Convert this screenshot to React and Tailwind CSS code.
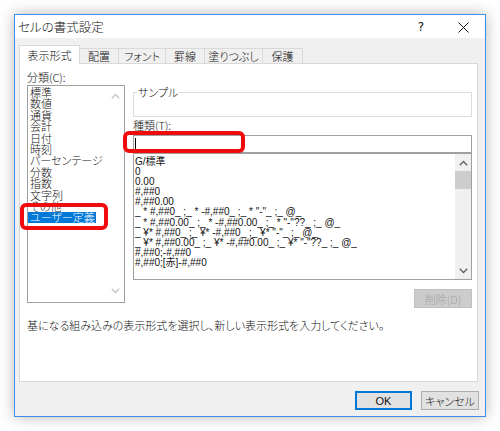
import React from "react";

const categories = [
  "標準",
  "数値",
  "通貨",
  "会計",
  "日付",
  "時刻",
  "パーセンテージ",
  "分数",
  "指数",
  "文字列",
  "その他",
  "ユーザー定義",
];

const formats = [
  "G/標準",
  "0",
  "0.00",
  "#,##0",
  "#,##0.00",
  '_ * #,##0_ ;_ * -#,##0_ ;_ * "-"_ ;_ @_',
  '_ * #,##0.00_ ;_ * -#,##0.00_ ;_ * "-"??_ ;_ @_',
  '_ ¥* #,##0_ ;_ ¥* -#,##0_ ;_ ¥* "-"_ ;_ @_',
  '_ ¥* #,##0.00_ ;_ ¥* -#,##0.00_ ;_ ¥* "-"??_ ;_ @_',
  "#,##0;-#,##0",
  "#,##0;[赤]-#,##0",
];

const tabs = [
  { label: "表示形式", w: "w-[61px]", active: true },
  { label: "配置", w: "w-[39px]" },
  { label: "フォント", w: "w-[48px]" },
  { label: "罫線", w: "w-[40px]" },
  { label: "塗りつぶし", w: "w-[59px]" },
  { label: "保護", w: "w-[41px]" },
];

function ChevUp({ color }) {
  return (
    <svg width="9" height="6" viewBox="0 0 9 6">
      <path d="M0.8 5.2 L4.5 1.5 L8.2 5.2" fill="none" stroke={color} strokeWidth="1.3" />
    </svg>
  );
}
function ChevDown({ color }) {
  return (
    <svg width="9" height="6" viewBox="0 0 9 6">
      <path d="M0.8 0.8 L4.5 4.5 L8.2 0.8" fill="none" stroke={color} strokeWidth="1.3" />
    </svg>
  );
}

export default function App() {
  return (
    <div className="relative w-[500px] h-[431px] bg-white p-[14px] text-[#111] text-[11px] font-light font-['Noto_Sans_CJK_JP',sans-serif] [font-feature-settings:'palt']">
      <div className="w-[472px] h-[403px] border border-[#3d8ee8] shadow-[0_0_14px_rgba(0,0,0,0.28)] bg-[#f0f0f0] flex flex-col">
        {/* title bar */}
        <div className="h-[23px] bg-white flex items-center pl-[3px] shrink-0">
          <span className="leading-[14px] pt-[1px] text-[12.5px]">セルの書式設定</span>
          <div className="ml-auto mr-[12px] flex items-center">
            <span className="w-[20px] text-center text-[12px] leading-[14px] font-normal font-['DejaVu_Sans',sans-serif] pt-[1px]">?</span>
            <span className="w-[20px] ml-[22px] flex items-center justify-center pt-[1px]">
              <svg width="11" height="11" viewBox="0 0 11 11">
                <path d="M0.5 0.5 L10.5 10.5 M10.5 0.5 L0.5 10.5" stroke="#111" strokeWidth="1" />
              </svg>
            </span>
          </div>
        </div>

        {/* body */}
        <div className="flex-1 pl-[4px] pr-[7px] pt-[7px] flex flex-col">
          {/* tabs */}
          <div className="h-[18px] flex items-end">
            {tabs.map((t, i) =>
              t.active ? (
                <div
                  key={t.label}
                  className={`${t.w} h-[19px] -mb-px relative z-10 bg-white border border-b-0 border-[#d9d9d9] flex items-center justify-center leading-[14px] pb-[1px]`}
                >
                  {t.label}
                </div>
              ) : (
                <div
                  key={t.label}
                  className={`${t.w} h-[15px] bg-[#f0f0f0] border border-b-0 border-[#d9d9d9] ${i > 1 ? "-ml-px" : "border-l-0"} flex items-center justify-center leading-[14px]`}
                >
                  {t.label}
                </div>
              )
            )}
          </div>

          {/* panel */}
          <div className="h-[319px] border border-[#d9d9d9] bg-white pl-[7px] pr-[5px] pt-[6px] flex flex-col">
            <div className="flex gap-[8px]">
              {/* left column */}
              <div className="w-[98px] flex flex-col">
                <div className="h-[15px] leading-[15px]">分類(C):</div>
                <div className="h-[218px] border border-[#a0a0a0] bg-white flex">
                  <div className="flex-1 pt-[1px] text-[11px]">
                    {categories.map((c) => (
                      <div key={c} className="h-[11.4px] leading-[11.4px] whitespace-nowrap">
                        {c === "ユーザー定義" ? (
                          <span className="inline-block bg-[#0078d7] text-white pl-[2px] pr-[1px] h-[11px]">{c}</span>
                        ) : (
                          <span className="pl-[2px]">{c}</span>
                        )}
                      </div>
                    ))}
                  </div>
                  <div className="w-[17px] flex flex-col items-center justify-between pt-[7px] pb-[8px]">
                    <ChevUp color="#c4c4c4" />
                    <ChevDown color="#c4c4c4" />
                  </div>
                </div>
              </div>

              {/* right column */}
              <div className="w-[339px] pt-[15px] flex flex-col">
                <fieldset className="h-[32px] border border-[#dcdcdc] px-[3px]">
                  <legend className="px-[1px] leading-[14px]">サンプル</legend>
                </fieldset>
                <div className="h-[18px] leading-[16px]">種類(T):</div>
                <div className="h-[18px] border border-[#a0a0a0] bg-white flex items-center">
                  <div className="w-px h-[12px] bg-black ml-px" />
                </div>
                <div className="h-[127px] border border-[#a0a0a0] bg-white flex">
                  <div className="flex-1 pt-[3px] pl-px text-[10px] leading-[10.1px] font-normal font-['Liberation_Sans','Noto_Sans_CJK_JP',sans-serif]">
                    {formats.map((f) => (
                      <div key={f} className="h-[10.1px] whitespace-pre">
                        {f}
                      </div>
                    ))}
                  </div>
                  <div className="w-[16px] bg-[#f0f0f0] flex flex-col">
                    <div className="h-[17px] flex items-center justify-center">
                      <ChevUp color="#606060" />
                    </div>
                    <div className="h-[18px] bg-[#cdcdcd]" />
                    <div className="flex-1" />
                    <div className="h-[17px] flex items-center justify-center">
                      <ChevDown color="#606060" />
                    </div>
                  </div>
                </div>
                <div className="mt-[9px] self-end w-[58px] h-[19px] bg-[#cccccc] border border-[#bfbfbf] text-[#a3a3a3] flex items-center justify-center leading-[14px]">
                  削除(D)
                </div>
              </div>
            </div>
            <div className="mt-[10px] h-[14px] leading-[14px] whitespace-nowrap">
              基になる組み込みの表示形式を選択し、新しい表示形式を入力してください。
            </div>
          </div>

          {/* buttons */}
          <div className="mt-[9px] -mr-px flex justify-end gap-[9px]">
            <div className="w-[57px] h-[19px] bg-[#e1e1e1] border-2 border-[#0078d7] flex items-center justify-center leading-[14px] font-normal font-['Liberation_Sans',sans-serif]">
              OK
            </div>
            <div className="w-[58px] h-[19px] bg-[#e1e1e1] border border-[#adadad] flex items-center justify-center leading-[14px]">
              キャンセル
            </div>
          </div>
        </div>
      </div>

      {/* red highlight overlays */}
      <div className="absolute left-[20px] top-[203px] w-[88px] h-[27px] border-[4px] border-[#f00c0c] rounded-[6px]" />
      <div className="absolute left-[123px] top-[131px] w-[122px] h-[22px] border-[4px] border-[#f00c0c] rounded-[6px]" />
    </div>
  );
}
